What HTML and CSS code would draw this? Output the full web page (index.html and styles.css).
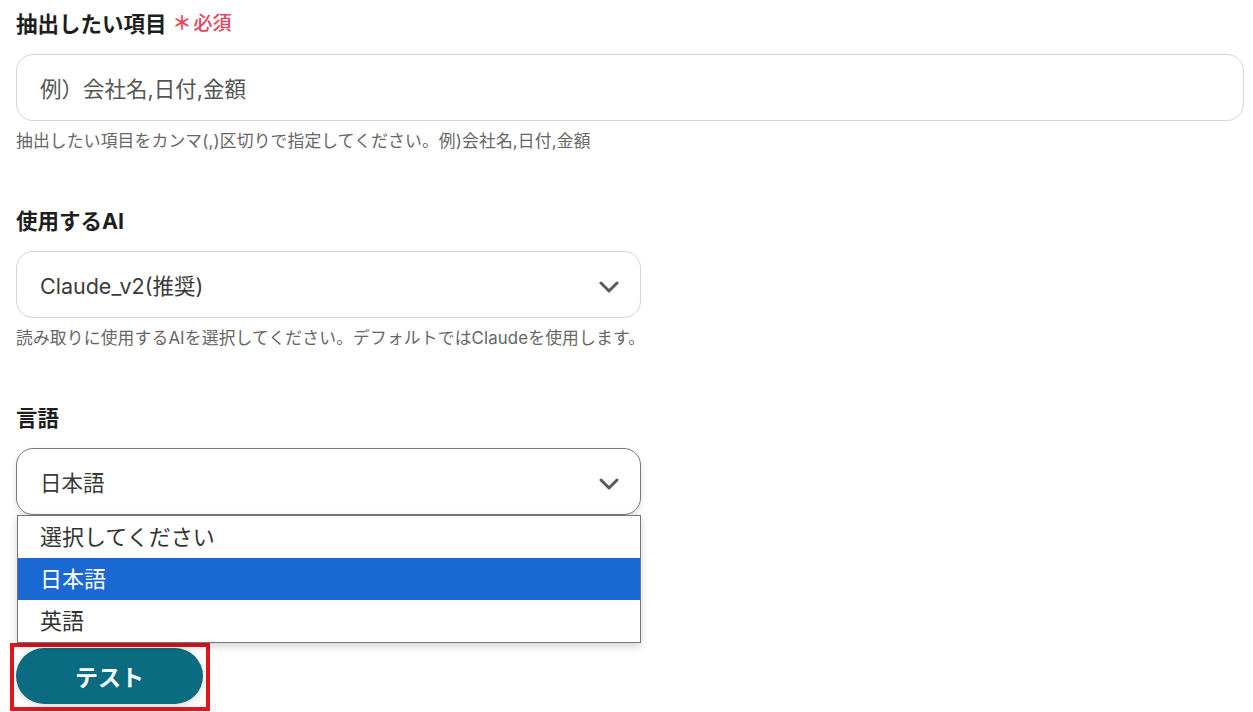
FILE: index.html
```html
<!DOCTYPE html>
<html lang="ja">
<head>
<meta charset="utf-8">
<link rel="stylesheet" href="styles.css">
</head>
<body>
<div class="page">
  <div class="field">
    <div class="label">抽出したい項目<span class="req"><span class="ast">＊</span>必須</span></div>
    <div class="box input"><span class="placeholder">例）会社名,日付,金額</span></div>
    <div class="help">抽出したい項目をカンマ(,)区切りで指定してください。例)会社名,日付,金額</div>
  </div>
  <div class="field">
    <div class="label">使用するAI</div>
    <div class="box select narrow"><span class="value">Claude_v2(推奨)</span>
      <svg class="chev" width="20" height="14" viewBox="0 0 20 14"><path d="M2 3 L10 11 L18 3" fill="none" stroke="#5a5a5a" stroke-width="3" stroke-linecap="round" stroke-linejoin="round"/></svg>
    </div>
    <div class="help">読み取りに使用するAIを選択してください。デフォルトではClaudeを使用します。</div>
  </div>
  <div class="field last">
    <div class="label">言語</div>
    <div class="selwrap">
      <div class="box select narrow focused"><span class="value">日本語</span>
        <svg class="chev" width="20" height="14" viewBox="0 0 20 14"><path d="M2 3 L10 11 L18 3" fill="none" stroke="#5a5a5a" stroke-width="3" stroke-linecap="round" stroke-linejoin="round"/></svg>
      </div>
      <ul class="menu">
        <li>選択してください</li>
        <li class="sel">日本語</li>
        <li>英語</li>
      </ul>
    </div>
  </div>
  <div class="btnwrap">
    <button class="btn">テスト</button>
  </div>
</div>
</body>
</html>
```
FILE: styles.css
```css
* { box-sizing: border-box; }
html, body { margin: 0; padding: 0; background: #fff; }
body {
  font-family: Inter, "Noto Sans CJK JP", sans-serif;
  color: #222;
  width: 1253px;
  height: 712px;
  overflow: hidden;
}
.page {
  padding: 9px 10px 0 16px;
}
.field { margin-bottom: 53px; }
.label {
  font-size: 21.5px;
  font-weight: 700;
  line-height: 30px;
  color: #1e1e1e;
  display: flex;
  align-items: center;
  margin-bottom: 15px;
}
.req {
  color: #ea4560;
  font-size: 19px;
  font-weight: 500;
  margin-left: 6px;
  display: flex;
  align-items: center;
}
.ast { font-weight: 700; font-size: 19px; margin-right: 2px; }
.box {
  height: 67px;
  border: 1px solid #d3d6dc;
  border-radius: 17px;
  background: #fff;
  display: flex;
  align-items: center;
  padding: 0 21px 0 23px;
  font-size: 21.5px;
}
.input { width: 1228px; }
.placeholder { color: #555; }
.narrow { width: 625px; justify-content: space-between; }
.value { color: #3a3a3a; }
.chev { margin-top: 4px; }
.focused {
  border-color: #7a7a7a;
  box-shadow: 0 3px 6px rgba(0,0,0,0.12);
}
.help {
  margin-top: 8px;
  font-size: 16.8px;
  line-height: 24px;
  color: #666;
  letter-spacing: 0.15px;
}
.selwrap { position: relative; width: 625px; }
.menu {
  position: absolute;
  left: 1px;
  top: 67px;
  width: 624px;
  margin: 0;
  padding: 0;
  list-style: none;
  background: #fff;
  border: 1px solid #767676;
  box-shadow: 0 3px 8px rgba(0,0,0,0.18);
  z-index: 2;
}
.menu li {
  height: 42px;
  line-height: 42px;
  padding-left: 22px;
  font-size: 22px;
  color: #333;
}
.menu li.sel { background: #1a68d2; color: #fff; }
.field.last { margin-bottom: 0; }
.btnwrap {
  margin-top: 128px;
  margin-left: -6px;
  width: 200px;
  height: 68px;
  border: 4px solid #e3141c;
  padding: 1px 2px;
}
.btn {
  width: 187px;
  height: 56px;
  border: none;
  border-radius: 28px;
  background: #0b6b80;
  color: #fff;
  font-family: Inter, "Noto Sans CJK JP", sans-serif;
  font-size: 23px;
  font-weight: 700;
  box-shadow: 0 2px 8px rgba(0,0,0,0.15);
  padding: 0;
}
```
